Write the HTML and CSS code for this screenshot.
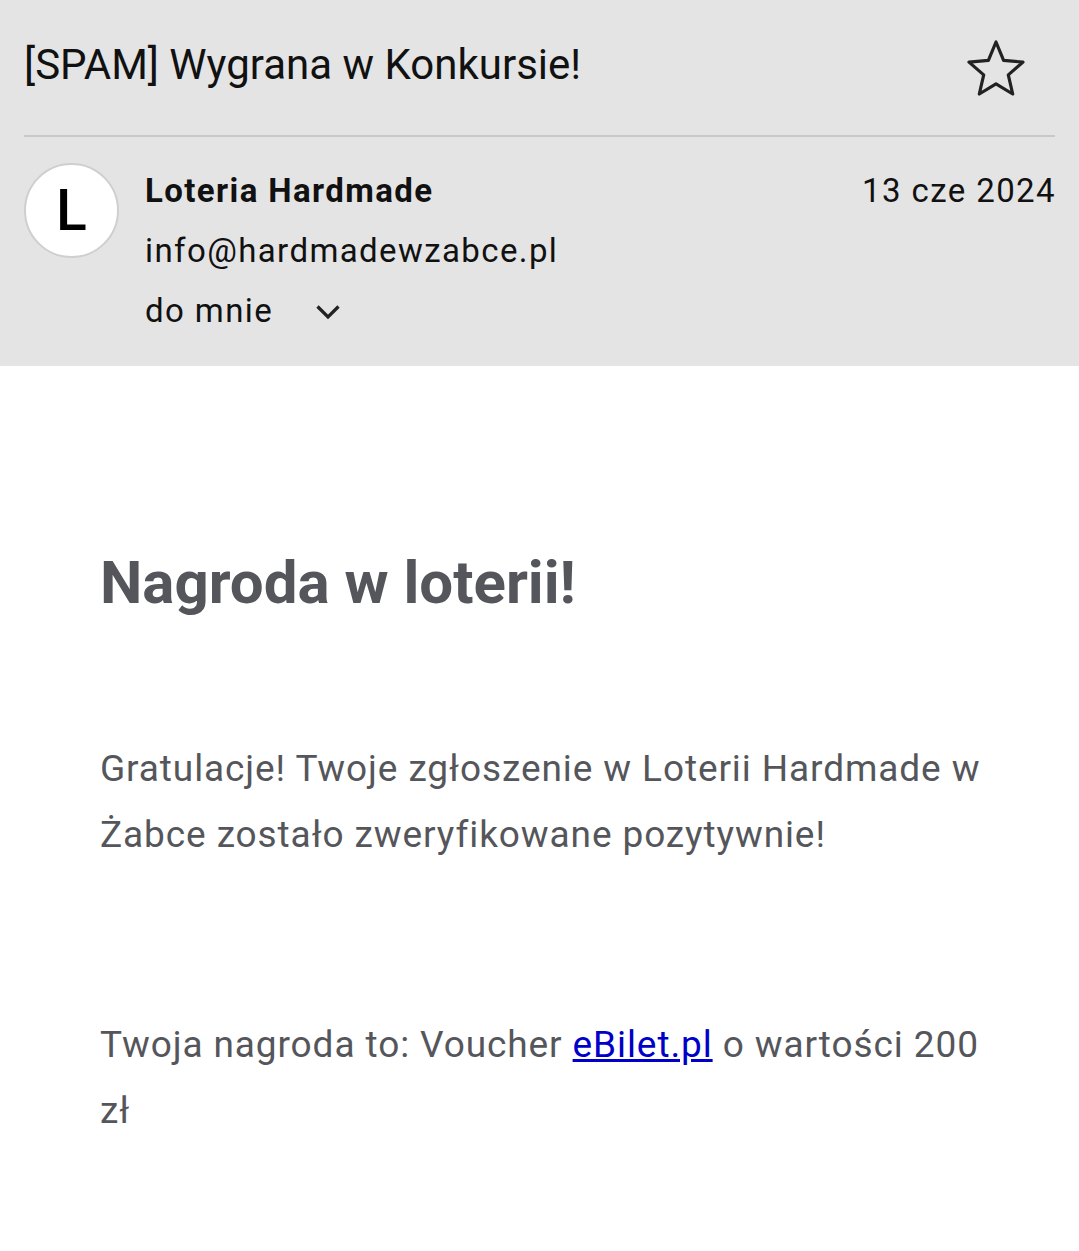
FILE: index.html
```html
<!DOCTYPE html>
<html lang="pl">
<head>
<meta charset="utf-8">
<title>[SPAM] Wygrana w Konkursie!</title>
<link rel="stylesheet" href="styles.css">
</head>
<body>
<header class="header">
  <div class="title-row">
    <h1 class="subject">[SPAM] Wygrana w Konkursie!</h1>
    <svg class="star" width="64" height="64" viewBox="0 0 64 64" aria-hidden="true">
      <path d="M32 5 L39.6 23.4 L59 25.1 L44.3 37.9 L48.7 57 L32 46.8 L15.3 57 L19.7 37.9 L5 25.1 L24.4 23.4 Z" fill="none" stroke="#222" stroke-width="3.2" stroke-linejoin="round"/>
    </svg>
  </div>
  <div class="sender-row">
    <div class="avatar">L</div>
    <div class="sender-info">
      <div class="sender-name">Loteria Hardmade</div>
      <div class="sender-email">info@hardmadewzabce.pl</div>
      <div class="recipient">do mnie
        <svg class="chevron" width="26" height="16" viewBox="0 0 26 16" aria-hidden="true">
          <path d="M2.5 2.5 L13 13 L23.5 2.5" fill="none" stroke="#222" stroke-width="3.2"/>
        </svg>
      </div>
    </div>
    <div class="date">13 cze 2024</div>
  </div>
</header>
<main class="content">
  <h2 class="headline">Nagroda w loterii!</h2>
  <p class="para">Gratulacje! Twoje zgłoszenie w Loterii Hardmade w Żabce zostało zweryfikowane pozytywnie!</p>
  <p class="para">Twoja nagroda to: Voucher <a class="link" href="#">eBilet.pl</a> o wartości 200 zł</p>
</main>
</body>
</html>
```

FILE: styles.css
```css
* { box-sizing: border-box; }
html, body { margin: 0; padding: 0; background: #ffffff; }
body { font-family: Roboto, "Noto Sans", sans-serif; color: #000; }

.header {
  background: #e4e4e4;
  padding: 0 24px;
  height: 366px;
}
.title-row {
  display: flex;
  align-items: center;
  justify-content: space-between;
  height: 137px;
  border-bottom: 2px solid #c9c9c9;
  padding-right: 27px;
}
.subject {
  margin: 0;
  font-size: 42px;
  font-weight: 400;
  color: #111;
  line-height: 1;
  padding-bottom: 6px;
}
.star { display: block; margin-top: 2px; }

.sender-row {
  display: flex;
  align-items: flex-start;
  padding-top: 24px;
}
.avatar {
  width: 95px;
  height: 95px;
  border-radius: 50%;
  background: #fff;
  border: 2px solid #cfcfcf;
  display: flex;
  align-items: center;
  justify-content: center;
  font-size: 57px;
  font-weight: 500;
  color: #000;
  margin-top: 2px;
  flex: none;
}
.sender-info {
  margin-left: 26px;
  flex: 1;
  font-size: 33px;
  line-height: 60px;
  letter-spacing: 1.4px;
  color: #111;
}
.sender-name { font-weight: 700; }
.recipient { display: flex; align-items: center; }
.chevron { margin-left: 42px; margin-top: 2px; }
.date {
  font-size: 33px;
  line-height: 60px;
  letter-spacing: 1.4px;
  margin-right: -1px;
  color: #111;
}

.content {
  padding: 180px 90px 40px 100px;
}
.headline {
  margin: 0;
  font-size: 60px;
  line-height: 74px;
  font-weight: 700;
  color: #55565b;
}
.para {
  margin: 116px 0 0 0;
  font-size: 37px;
  line-height: 66px;
  letter-spacing: 0.9px;
  color: #55565b;
}
.para + .para { margin-top: 144px; }
.link { color: #0000c8; text-decoration: underline; }
```
